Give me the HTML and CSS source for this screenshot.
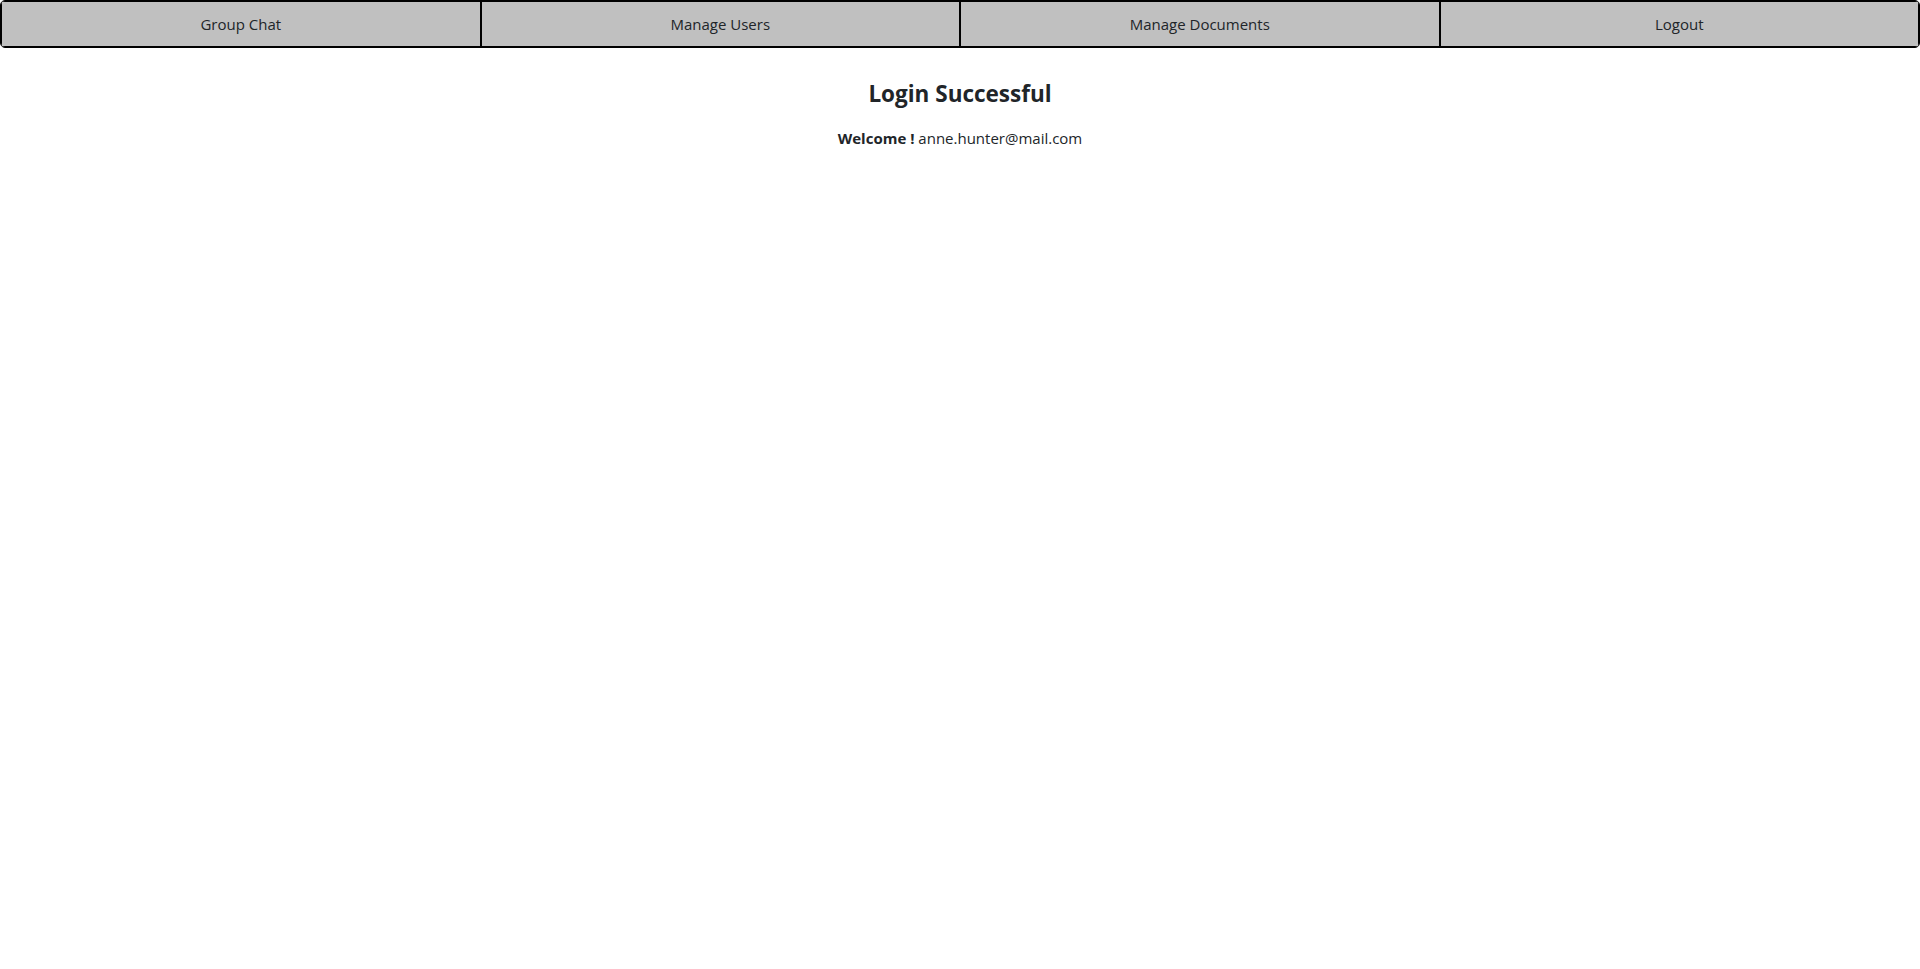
FILE: index.html
```html
<!DOCTYPE html>
<html lang="en">
<head>
<meta charset="utf-8">
<title>Login Successful</title>
<link rel="stylesheet" href="styles.css">
</head>
<body>
<nav class="topnav">
  <button class="nav-btn">Group Chat</button>
  <button class="nav-btn">Manage Users</button>
  <button class="nav-btn">Manage Documents</button>
  <button class="nav-btn">Logout</button>
</nav>
<main class="content">
  <h2 class="title">Login Successful</h2>
  <p class="welcome"><strong>Welcome !</strong> anne.hunter@mail.com</p>
</main>
</body>
</html>
```
FILE: styles.css
```css
html, body {
  margin: 0;
  padding: 0;
  background: #fff;
}
body {
  font-family: "Open Sans", "Noto Sans", sans-serif;
  color: #212529;
}
.topnav {
  display: flex;
  border: 1px solid #000;
  border-radius: 5px;
  overflow: hidden;
  background: #c0c0c0;
}
.nav-btn {
  flex: 1 1 0;
  height: 46px;
  margin: 0;
  background: #c0c0c0;
  border: 1px solid #000;
  font-family: "Open Sans", "Noto Sans", sans-serif;
  font-size: 15px;
  color: #212529;
  padding: 0;
}
.content {
  text-align: center;
  padding-top: 32px;
}
.title {
  margin: 0;
  font-size: 22.5px;
  font-weight: 700;
  line-height: 1.2;
}
.welcome {
  margin: 20px 0 0;
  font-size: 15px;
  line-height: 1.5;
}
```
